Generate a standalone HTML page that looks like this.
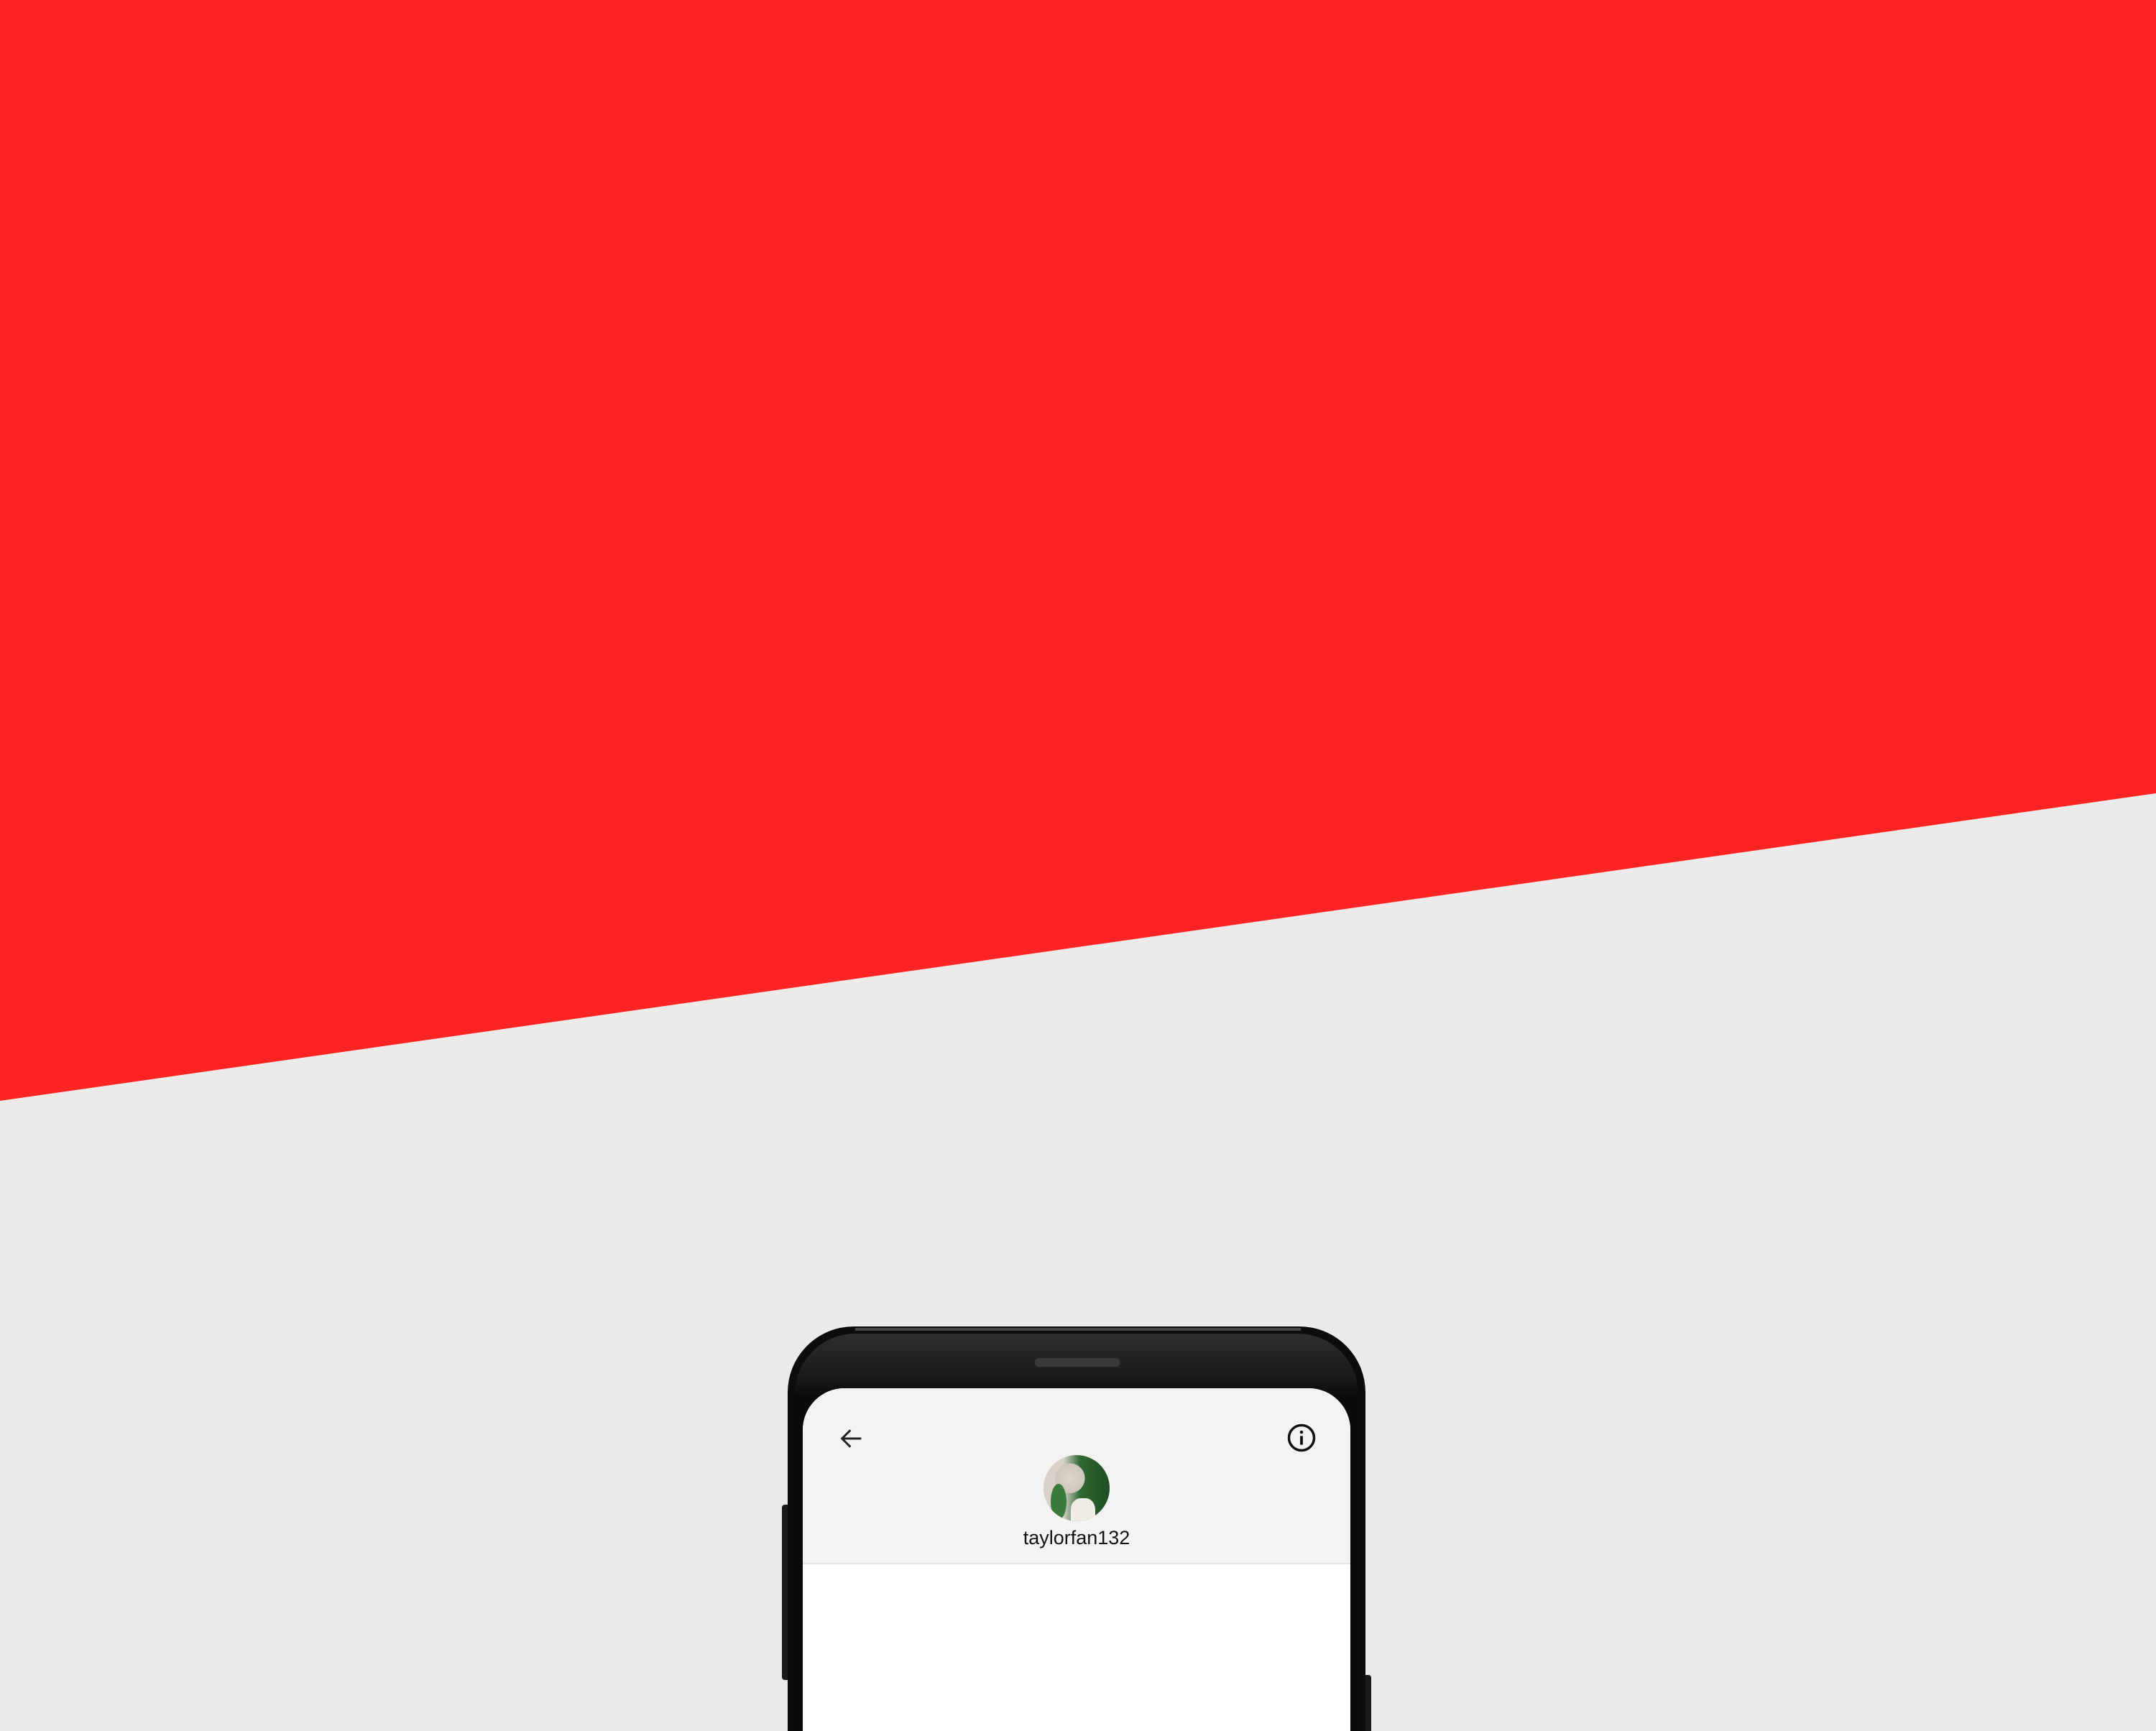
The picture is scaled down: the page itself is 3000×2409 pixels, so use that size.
<!DOCTYPE html>
<html style="overflow:hidden;height:2409px"><head><style>
html,body{margin:0;padding:0}
body{width:3000px;height:2409px;position:relative;overflow:hidden;background:#ecebe9;font-family:"Liberation Sans",sans-serif}
.abs{position:absolute}
</style></head><body>
<svg class="abs" style="left:0;top:0" width="3000" height="2409">
<polygon points="0,0 3000,0 3000,1104 0,1532" fill="#ff2323"/>
</svg>
<div class="abs" style="left:1088px;top:2094px;width:14px;height:244px;background:#1a1a1a;border-radius:4px"></div>
<div class="abs" style="left:1896px;top:2331px;width:12px;height:78px;background:#1a1a1a;border-radius:4px 4px 0 0"></div>
<div class="abs" style="left:1096px;top:1846px;width:804px;height:563px;background:#0c0c0c;border-radius:92px 92px 0 0"></div>
<div class="abs" style="left:1106px;top:1856px;width:784px;height:553px;background:linear-gradient(180deg,#2e2e2e 0,#1a1a1a 60px,#0a0a0a 90px);border-radius:84px 84px 0 0"></div>
<div class="abs" style="left:1190px;top:1848px;width:620px;height:4px;background:#444"></div>
<div class="abs" style="left:1439px;top:1889px;width:118px;height:12px;background:#3a3a3a;border-radius:6px;border:1px solid #222"></div>
<div class="abs" style="left:1117px;top:1932px;width:762px;height:477px;background:#fff;border-radius:58px 58px 0 0;overflow:hidden">
  <div style="position:absolute;left:0;top:0;width:762px;height:243px;background:#f3f3f3;border-bottom:2px solid #e3e3e3"></div>
</div>
<svg class="abs" style="left:1165px;top:1982px" width="40" height="40" viewBox="0 0 24 24">
<path d="M20 12H4M11 5l-7 7 7 7" fill="none" stroke="#222" stroke-width="1.8"/>
</svg>
<svg class="abs" style="left:1790px;top:1980px" width="42" height="42" viewBox="0 0 24 24">
<circle cx="12" cy="12" r="10" fill="none" stroke="#111" stroke-width="2"/>
<circle cx="12" cy="7.5" r="1.3" fill="#111"/>
<path d="M12 10.5v7" stroke="#111" stroke-width="2.2"/>
</svg>
<div class="abs" style="left:1452px;top:2025px;width:92px;height:92px;border-radius:50%;overflow:hidden;background:radial-gradient(circle at 40% 35%,#ddd5cc 0,#cfc6bb 25%,transparent 26%),linear-gradient(90deg,#d8d2ca 0,#d8d2ca 30%,#2f6a33 55%,#1f4d22 100%)">
  <div style="position:absolute;left:10px;top:40px;width:22px;height:50px;background:#3b7a3d;border-radius:50%"></div>
  <div style="position:absolute;left:38px;top:60px;width:34px;height:40px;background:#f2ece6;border-radius:40% 40% 0 0"></div>
</div>
<div class="abs" style="left:1398px;top:2125px;width:200px;text-align:center;font-size:27px;color:#111">taylorfan132</div>
</body></html>
